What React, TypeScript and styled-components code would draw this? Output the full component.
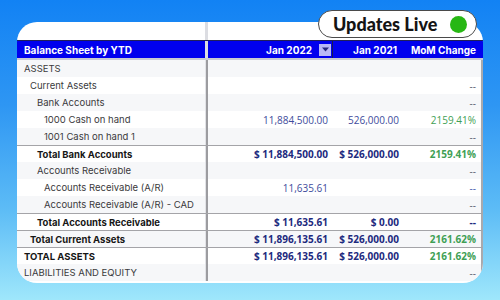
import React from 'react'
import styled, { createGlobalStyle } from 'styled-components'

const GlobalStyle = createGlobalStyle`
  html, body {
    margin: 0;
    padding: 0;
  }
  body {
    width: 500px;
    height: 300px;
    overflow: hidden;
    background: linear-gradient(180deg, #1282f4 0%, #2e96f3 35%, #5dbcf6 70%, #9fe7fb 100%);
    font-family: Inter, "Liberation Sans", sans-serif;
  }
`

type Row = {
  label: string
  level: number
  bold?: boolean
  total?: boolean
  jan22?: string
  jan21?: string
  mom?: string
  momTone?: 'green' | 'grey' | 'blue' | 'navy'
}

const rows: Row[] = [
  { label: 'ASSETS', level: 0 },
  { label: 'Current Assets', level: 1, mom: '--', momTone: 'grey' },
  { label: 'Bank Accounts', level: 2, mom: '--', momTone: 'grey' },
  { label: '1000 Cash on hand', level: 3, jan22: '11,884,500.00', jan21: '526,000.00', mom: '2159.41%', momTone: 'green' },
  { label: '1001 Cash on hand 1', level: 3, mom: '--', momTone: 'grey' },
  { label: 'Total Bank Accounts', level: 2, bold: true, total: true, jan22: '$ 11,884,500.00', jan21: '$ 526,000.00', mom: '2159.41%', momTone: 'green' },
  { label: 'Accounts Receivable', level: 2, mom: '--', momTone: 'grey' },
  { label: 'Accounts Receivable (A/R)', level: 3, jan22: '11,635.61', mom: '--', momTone: 'blue' },
  { label: 'Accounts Receivable (A/R) - CAD', level: 3, mom: '--', momTone: 'grey' },
  { label: 'Total Accounts Receivable', level: 2, bold: true, total: true, jan22: '$ 11,635.61', jan21: '$ 0.00', mom: '--', momTone: 'navy' },
  { label: 'Total Current Assets', level: 1, bold: true, total: true, jan22: '$ 11,896,135.61', jan21: '$ 526,000.00', mom: '2161.62%', momTone: 'green' },
  { label: 'TOTAL ASSETS', level: 0, bold: true, total: true, jan22: '$ 11,896,135.61', jan21: '$ 526,000.00', mom: '2161.62%', momTone: 'green' },
  { label: 'LIABILITIES AND EQUITY', level: 0, mom: '--', momTone: 'grey' },
]

const indents = [7, 13, 20, 27]

const toneColors = {
  green: '#3f9f55',
  grey: '#5e6070',
  blue: '#4a5cae',
  navy: '#1d2a7e',
}

const App = () => {
  return (
    <>
      <GlobalStyle />
      <Stage>
        <Card>
          <TopGap>
            <TopGapLeft />
          </TopGap>
          <HeaderRow>
            <HeadLabel>Balance Sheet by YTD</HeadLabel>
            <HeadCell $divider>
              Jan 2022
              <SortButton>
                <svg width="7" height="5" viewBox="0 0 7 5">
                  <path d="M0 0.5 L7 0.5 L3.5 4.5 Z" fill="#2a2a80" />
                </svg>
              </SortButton>
            </HeadCell>
            <HeadCell>Jan 2021</HeadCell>
            <HeadCell>MoM Change</HeadCell>
          </HeaderRow>
          {rows.map((r, i) => (
            <BodyRow key={r.label} $striped={i % 2 === 0} $total={!!r.total}>
              <LabelCell $indent={indents[r.level]} $bold={!!r.bold}>
                {r.label}
              </LabelCell>
              <ValueCell $bold={!!r.bold}>{r.jan22}</ValueCell>
              <ValueCell $bold={!!r.bold}>{r.jan21}</ValueCell>
              <ValueCell $bold={!!r.bold} $color={r.momTone ? toneColors[r.momTone] : undefined}>
                {r.mom}
              </ValueCell>
            </BodyRow>
          ))}
        </Card>
        <LiveBadge>
          Updates Live
          <LiveDot />
        </LiveBadge>
      </Stage>
    </>
  )
}

export default App

const Stage = styled.div`
  position: relative;
  width: 500px;
  height: 300px;
  padding: 22px 0 0 17px;
  box-sizing: border-box;
`

const Card = styled.div`
  width: 466px;
  height: 261px;
  background: #ffffff;
  border-radius: 20px;
  overflow: hidden;
  display: flex;
  flex-direction: column;
`

const TopGap = styled.div`
  height: 18px;
  display: flex;
`

const TopGapLeft = styled.div`
  width: 188px;
  border-right: 3px solid #dcdde2;
`

const HeaderRow = styled.div`
  display: grid;
  grid-template-columns: 191px 125px 71px 79px;
  height: 17px;
  border-top: 1px solid #20205a;
  border-bottom: 2px solid #c9cad2;
  background: #0000ee;
  color: #ffffff;
  font-weight: 700;
  font-size: 10px;
`

const HeadLabel = styled.div`
  display: flex;
  align-items: center;
  padding-left: 7px;
  border-right: 3px solid #dcdde2;
`

const HeadCell = styled.div<{ $divider?: boolean }>`
  display: flex;
  align-items: center;
  justify-content: flex-end;
  padding-right: ${p => (p.$divider ? '1px' : '7px')};
  border-right: ${p => (p.$divider ? '1px solid #1a1a50' : 'none')};
`

const SortButton = styled.span`
  display: flex;
  align-items: center;
  justify-content: center;
  width: 12px;
  height: 12px;
  margin-left: 7px;
  background: #b9b9f6;
`

const BodyRow = styled.div<{ $striped: boolean; $total: boolean }>`
  display: grid;
  grid-template-columns: 191px 125px 71px 77px;
  height: 17px;
  box-sizing: border-box;
  background: ${p => (p.$striped ? '#f6f7f9' : '#ffffff')};
  border-top: ${p => (p.$total ? '1px solid #a4a4a8' : 'none')};
  border-right: 2px solid #a9a9ad;
`

const LabelCell = styled.div<{ $indent: number; $bold: boolean }>`
  display: flex;
  align-items: center;
  padding-left: ${p => p.$indent}px;
  border-right: 2px solid #9c9ca0;
  box-shadow: inset -1px 0 0 #e2e3e7;
  font-size: 9.5px;
  font-weight: ${p => (p.$bold ? 700 : 400)};
  color: ${p => (p.$bold ? '#161616' : '#3a3a3c')};
  white-space: nowrap;
`

const ValueCell = styled.div<{ $bold: boolean; $color?: string }>`
  display: flex;
  align-items: center;
  justify-content: flex-end;
  padding-right: 5px;
  font-family: "Open Sans", "Noto Sans", sans-serif;
  font-size: 10px;
  font-weight: ${p => (p.$bold ? 700 : 400)};
  color: ${p => p.$color ?? (p.$bold ? '#1d2a7e' : '#3e4c9c')};
  white-space: nowrap;
`

const LiveBadge = styled.div`
  position: absolute;
  left: 318px;
  top: 10px;
  width: 159px;
  height: 28px;
  box-sizing: border-box;
  border: 1px solid #4a4a4a;
  border-radius: 14px;
  background: #ffffff;
  display: flex;
  align-items: center;
  justify-content: space-between;
  padding: 0 9px 0 14px;
  font-family: Lato, Inter, sans-serif;
  font-weight: 900;
  font-size: 18px;
  color: #141414;
`

const LiveDot = styled.span`
  width: 17px;
  height: 17px;
  border-radius: 50%;
  background: #27b714;
`
